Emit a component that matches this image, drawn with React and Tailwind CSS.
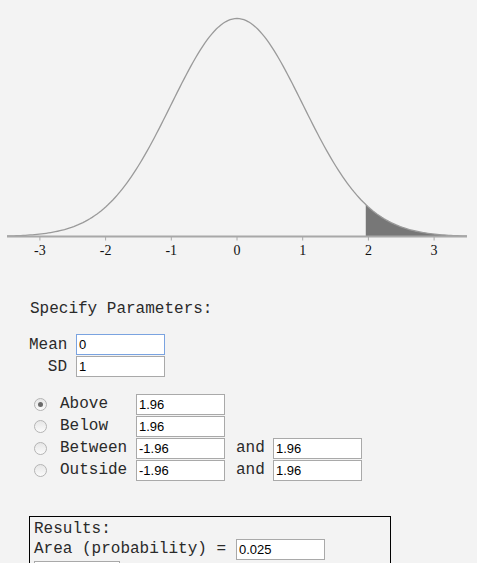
import React from 'react';

const W = 477;
const X0 = 237;
const UNIT = 65.7;
const BASE = 236.5;
const PEAK = 218;

function px(z) {
  return X0 + z * UNIT;
}
function py(z) {
  return BASE - PEAK * Math.exp(-(z * z) / 2);
}

function curvePath(from, to, steps = 200) {
  let d = '';
  for (let i = 0; i <= steps; i++) {
    const z = from + ((to - from) * i) / steps;
    d += `${i === 0 ? 'M' : 'L'}${px(z).toFixed(2)},${py(z).toFixed(2)} `;
  }
  return d;
}

function NormalChart() {
  const shade = `M${px(1.96).toFixed(2)},${BASE} ` + curvePath(1.96, 3.5).replace(/^M/, 'L') + ` L${px(3.5).toFixed(2)},${BASE} Z`;
  return (
    <svg width={W} height={270} className="block">
      <path d={shade} fill="#777777" />
      <path d={curvePath(-3.5, 3.5)} fill="none" stroke="#9a9a9a" strokeWidth="1.3" />
      <line x1={7} y1={BASE} x2={467} y2={BASE} stroke="#a8a8a8" strokeWidth="2" />
      {[-3, -2, -1, 0, 1, 2, 3].map((t) => (
        <g key={t}>
          <line x1={px(t)} y1={BASE} x2={px(t)} y2={BASE + 4} stroke="#a8a8a8" strokeWidth="1" />
          <text
            x={px(t)}
            y={255}
            textAnchor="middle"
            fontSize="14"
            fill="#111"
            style={{ fontFamily: '"Liberation Serif", serif' }}
          >
            {t}
          </text>
        </g>
      ))}
    </svg>
  );
}

function Field({ value, focused }) {
  return (
    <input
      type="text"
      defaultValue={value}
      className={`w-[89px] h-[21px] px-[2px] bg-white text-[13px] text-black font-['Liberation_Sans',Arial,sans-serif] outline-none border ${focused ? 'border-[#7aa3e0]' : 'border-[#a9a9a9]'}`}
    />
  );
}

function Radio({ checked }) {
  return (
    <span className="ml-[4px] w-[13px] h-[13px] rounded-full border border-[#b4b4b4] bg-gradient-to-b from-[#e6e6e6] to-[#fbfbfb] flex items-center justify-center shrink-0">
      {checked && <span className="w-[5px] h-[5px] rounded-full bg-[#6a6a6a]" />}
    </span>
  );
}

const rows = [
  { label: 'Above', a: '1.96', checked: true },
  { label: 'Below', a: '1.96' },
  { label: 'Between', a: '-1.96', b: '1.96' },
  { label: 'Outside', a: '-1.96', b: '1.96' },
];

export default function App() {
  return (
    <div className="w-[477px] h-[563px] overflow-hidden bg-[#f3f3f3] text-[#2a2a2a] font-['Liberation_Mono','Courier_New',monospace] text-[16px] leading-[18px]">
      <NormalChart />

      <div className="pl-[30px] pt-[30px]">
        <div>Specify Parameters:</div>

        <div className="mt-[16px] flex flex-col gap-[1px]">
          <div className="flex items-center h-[21px]">
            <span className="w-[38px] text-right -ml-[1px]">Mean</span>
            <span className="ml-[9px]"><Field value="0" focused /></span>
          </div>
          <div className="flex items-center h-[21px]">
            <span className="w-[38px] text-right -ml-[1px]">SD</span>
            <span className="ml-[9px]"><Field value="1" /></span>
          </div>
        </div>

        <div className="mt-[16px] flex flex-col">
          {rows.map((r) => (
            <div key={r.label} className="flex items-center h-[22px]">
              <Radio checked={r.checked} />
              <span className="ml-[13px] w-[76px]">{r.label}</span>
              <Field value={r.a} />
              {r.b && (
                <>
                  <span className="ml-[11px] w-[37px]">and</span>
                  <Field value={r.b} />
                </>
              )}
            </div>
          ))}
        </div>

        <div className="mt-[35px] -ml-[1px] w-[362px] border border-black pl-[4px] pt-[3px] pb-[6px]">
          <div>Results:</div>
          <div className="flex items-center h-[20px] mt-[1px]">
            <span className="w-[202px]">Area (probability) =</span>
            <Field value="0.025" />
          </div>
          <div className="mt-[2px] w-[86px] h-[21px] bg-white border border-[#a9a9a9]" />
        </div>
      </div>
    </div>
  );
}
